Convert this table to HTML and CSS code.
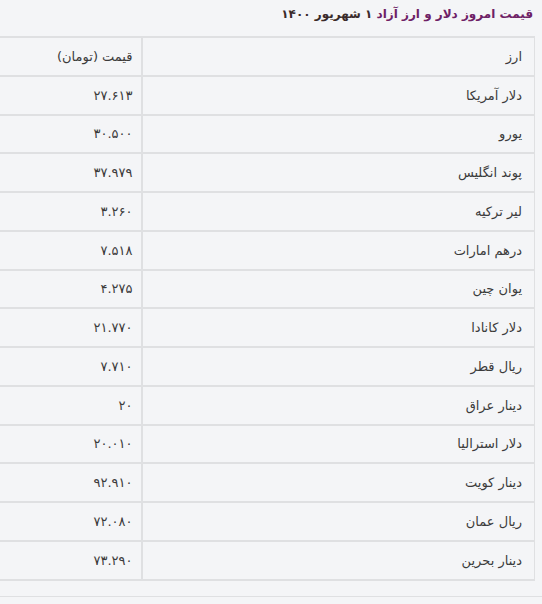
FILE: index.html
```html
<!DOCTYPE html>
<html lang="fa" dir="rtl">
<head>
<meta charset="utf-8">
<link rel="stylesheet" href="styles.css">
</head>
<body>
<div class="page">
  <h2 class="title"><span class="accent">قیمت امروز دلار و ارز آزاد</span> ۱ شهریور ۱۴۰۰</h2>
  <div class="wrap">
    <table class="rates">
      <tbody>
        <tr><td class="name">ارز</td><td class="price">قیمت (تومان)</td></tr>
        <tr><td class="name">دلار آمریکا</td><td class="price">۲۷.۶۱۳</td></tr>
        <tr><td class="name">یورو</td><td class="price">۳۰.۵۰۰</td></tr>
        <tr><td class="name">پوند انگلیس</td><td class="price">۳۷.۹۷۹</td></tr>
        <tr><td class="name">لیر ترکیه</td><td class="price">۳.۲۶۰</td></tr>
        <tr><td class="name">درهم امارات</td><td class="price">۷.۵۱۸</td></tr>
        <tr><td class="name">یوان چین</td><td class="price">۴.۲۷۵</td></tr>
        <tr><td class="name">دلار کانادا</td><td class="price">۲۱.۷۷۰</td></tr>
        <tr><td class="name">ریال قطر</td><td class="price">۷.۷۱۰</td></tr>
        <tr><td class="name">دینار عراق</td><td class="price">۲۰</td></tr>
        <tr><td class="name">دلار استرالیا</td><td class="price">۲۰.۰۱۰</td></tr>
        <tr><td class="name">دینار کویت</td><td class="price">۹۲.۹۱۰</td></tr>
        <tr><td class="name">ریال عمان</td><td class="price">۷۲.۰۸۰</td></tr>
        <tr><td class="name">دینار بحرین</td><td class="price">۷۳.۲۹۰</td></tr>
      </tbody>
    </table>
  </div>
  <div class="after"></div>
</div>
</body>
</html>
```
FILE: styles.css
```css
html, body {
  margin: 0;
  padding: 0;
  background: #f4f5f7;
}
body {
  font-family: "DejaVu Sans", sans-serif;
  color: #3b3b3b;
  overflow: hidden;
}
.page {
  width: 542px;
  overflow: hidden;
}
.title {
  margin: 0;
  padding: 4px 9px 0 0;
  height: 36px;
  box-sizing: border-box;
  font-size: 12px;
  font-weight: bold;
  color: #3a2b2b;
  line-height: 20px;
}
.accent {
  color: #6e2166;
}
.wrap {
  padding-right: 7px;
  overflow: hidden;
}
.rates {
  width: 555px;
  border-collapse: collapse;
  border-top: 2px solid #dfe0e2;
  border-right: 1px solid #dfe0e2;
  font-size: 13px;
}
.rates td {
  height: 38.75px;
  padding: 0 12px;
  border-bottom: 2px solid #dfe0e2;
  text-align: right;
  vertical-align: middle;
  box-sizing: border-box;
}
.rates td.name {
  width: 393px;
}
.rates td.price {
  border-right: 2px solid #dfe0e2;
  padding-right: 8px;
}
.after {
  margin-top: 15px;
  border-top: 1px solid #dfe0e2;
  height: 10px;
}
```
